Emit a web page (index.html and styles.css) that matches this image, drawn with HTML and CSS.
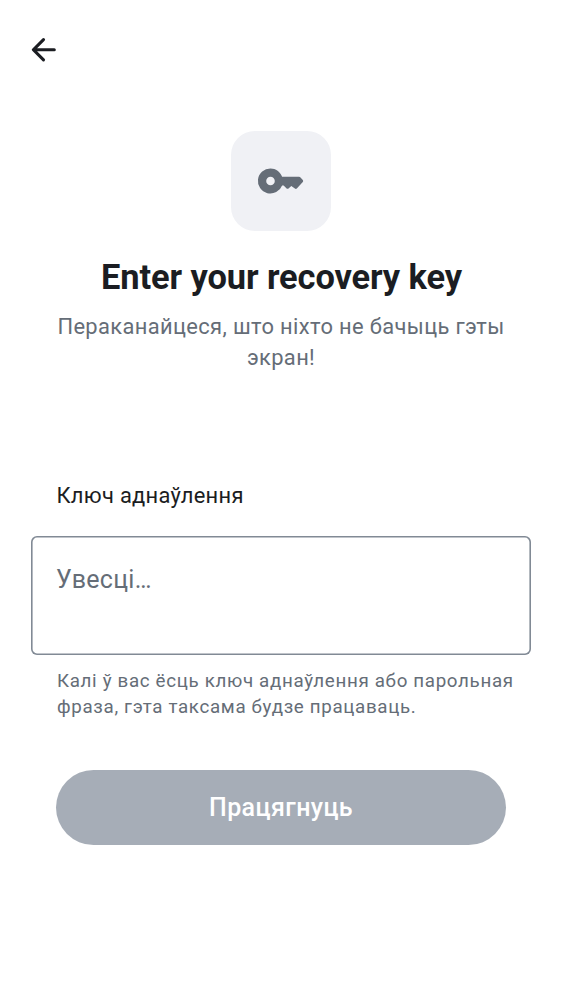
FILE: index.html
```html
<!DOCTYPE html>
<html lang="be">
<head>
<meta charset="utf-8">
<title>Enter your recovery key</title>
<link rel="stylesheet" href="styles.css">
</head>
<body>
<main class="screen">
  <header class="topbar">
    <svg class="back" viewBox="0 0 24 24"><path d="m7.83 13 4.88 4.88a1 1 0 1 1-1.42 1.41l-6.58-6.58a1 1 0 0 1 0-1.42l6.58-6.58a1 1 0 1 1 1.42 1.41L7.83 11H19a1 1 0 1 1 0 2z"/></svg>
  </header>
  <section class="hero">
    <div class="tile"><svg class="key" viewBox="0 0 50 50"><path fill-rule="evenodd" d="M14.500 12.500c5.300 0 9.800 3.300 11.600 8.300H43q.9 0 1.500.6l2.300 2.700q.8.900 0 1.800l-6 6.600q-.9.900-1.900.1l-3.600-2.700-2.800 2.500q-.9.800-1.900 0L27.600 29.400H26.100A12.500 12.500 0 1 1 14.500 12.500ZM14.500 20.700a4.300 4.300 0 1 0 0 8.600 4.300 4.300 0 0 0 0-8.600Z"/></svg></div>
    <h1 class="title">Enter your recovery key</h1>
    <p class="subtitle">Пераканайцеся, што ніхто не бачыць гэты экран!</p>
  </section>
  <section class="form">
    <label class="label">Ключ аднаўлення</label>
    <div class="field">Увесці…</div>
    <p class="hint">Калі ў вас ёсць ключ аднаўлення або парольная фраза, гэта таксама будзе працаваць.</p>
  </section>
  <button class="submit">Працягнуць</button>
</main>
</body>
</html>
```
FILE: styles.css
```css
* { box-sizing: border-box; }
body { margin: 0; background: #fff; font-family: Roboto, sans-serif; color: #1b1d22; }
h1, p { margin: 0; }
svg { display: block; }
.screen { height: 1000px; display: flex; flex-direction: column; padding: 31px 31px 0; }
.topbar { height: 100px; }
.back { width: 37px; height: 37.5px; margin-left: -6px; fill: #1b1d22; }
.hero { height: 349px; display: flex; flex-direction: column; align-items: center; text-align: center; }
.tile { width: 100px; height: 100px; border-radius: 24px; background: #f0f1f5; display: grid; place-items: center; }
.key { width: 50px; height: 50px; fill: #656d77; }
.title { margin-top: 25px; padding-left: 1px; font-size: 34.4px; line-height: 42px; font-weight: 700; letter-spacing: -.09px; white-space: nowrap; }
.subtitle { width: 460px; margin-top: 13px; font-size: 21.9px; line-height: 31.25px; letter-spacing: .36px; color: #656d77; }
.form { display: flex; flex-direction: column; height: 290px; }
.label { padding-left: 25.5px; font-size: 21.9px; line-height: 31px; letter-spacing: .29px; }
.field { margin-top: 25px; height: 119px; border-radius: 6px; box-shadow: inset 0 0 0 1.6px #818a95; padding: 25px; font-size: 25px; line-height: 37px; letter-spacing: .3px; color: #656d77; }
.hint { margin-top: 12.5px; padding-left: 26px; width: 490px; font-size: 18.75px; line-height: 26.4px; letter-spacing: .67px; color: #656d77; }
.submit { margin: 0 25px; height: 75px; flex: none; border: 0; border-radius: 38px; background: #a6adb7; color: #fff; font: 500 25px/37px Roboto, sans-serif; letter-spacing: .39px; }
```
